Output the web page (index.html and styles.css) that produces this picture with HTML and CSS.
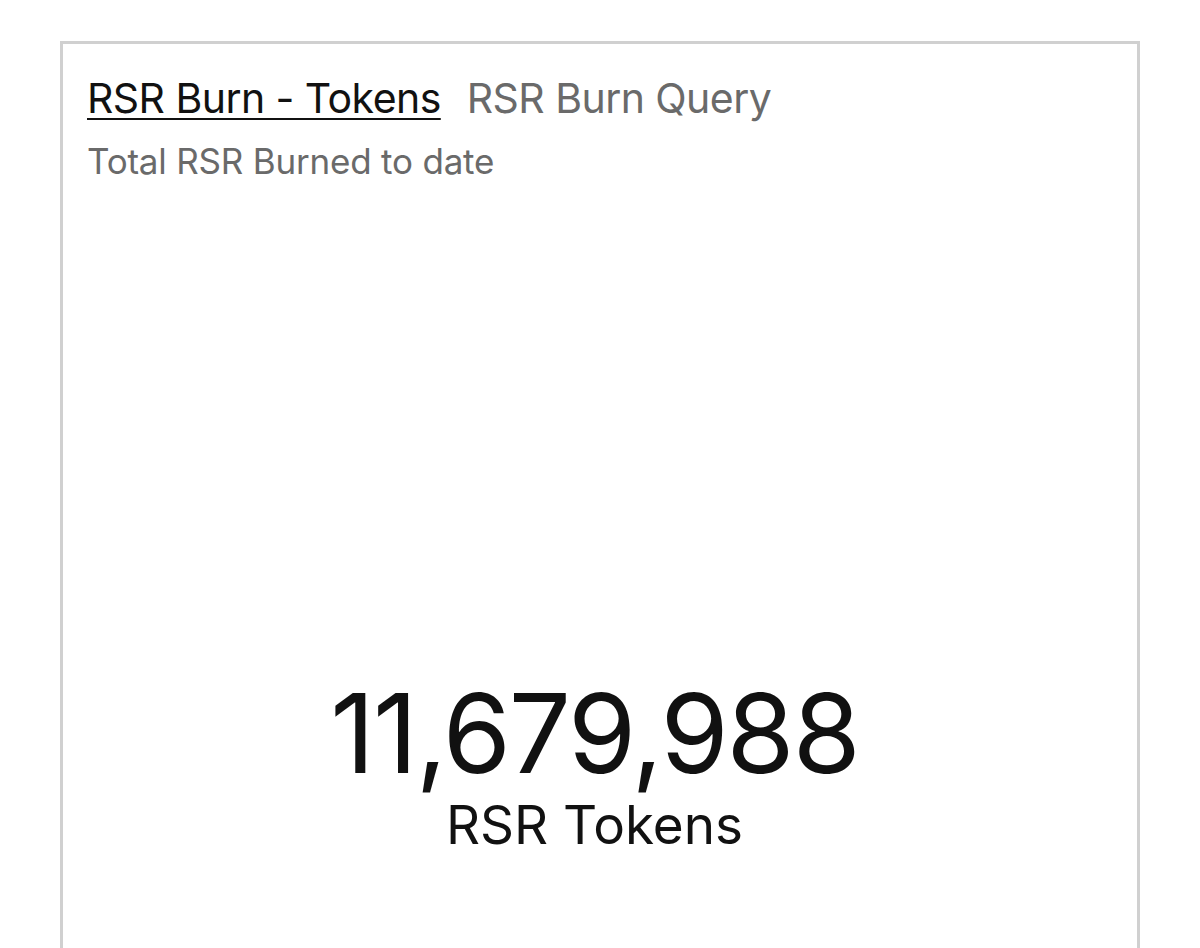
FILE: index.html
```html
<!DOCTYPE html>
<html>
<head>
<meta charset="utf-8">
<title>RSR Burn - Tokens</title>
<link rel="stylesheet" href="styles.css">
</head>
<body>
<div class="card">
  <div class="tabs">
    <a class="tab tab-active" href="#">RSR Burn - Tokens</a>
    <a class="tab" href="#">RSR Burn Query</a>
  </div>
  <div class="subtitle">Total RSR Burned to date</div>
  <div class="counter">
    <div class="value">11,679,988</div>
    <div class="unit">RSR Tokens</div>
  </div>
</div>
</body>
</html>
```
FILE: styles.css
```css
html, body {
  margin: 0;
  padding: 0;
  background: #ffffff;
}
body {
  padding-top: 41px;
  font-family: Inter, "Liberation Sans", sans-serif;
}
.card {
  margin-left: 60px;
  width: 1080px;
  min-height: 960px;
  border: 3px solid #d0d0d0;
  border-bottom: none;
  padding: 29px 35px 0 24px;
  box-sizing: border-box;
}
.tabs {
  display: flex;
  gap: 26px;
  align-items: baseline;
}
.tab {
  font-size: 41px;
  line-height: 50px;
  color: #6a6a6a;
  text-decoration: none;
  letter-spacing: -0.55px;
}
.tab-active {
  color: #111111;
  text-decoration: underline;
  text-decoration-thickness: 2px;
  text-underline-offset: 5px;
}
.subtitle {
  margin-top: 17px;
  font-size: 35px;
  line-height: 42px;
  color: #6a6a6a;
  letter-spacing: -0.2px;
}
.counter {
  margin-top: 491px;
  display: flex;
  flex-direction: column;
  align-items: center;
  color: #111111;
}
.value {
  font-size: 110px;
  line-height: 120px;
  letter-spacing: -2px;
}
.unit {
  font-size: 53px;
  line-height: 64px;
  letter-spacing: 0;
}
```
